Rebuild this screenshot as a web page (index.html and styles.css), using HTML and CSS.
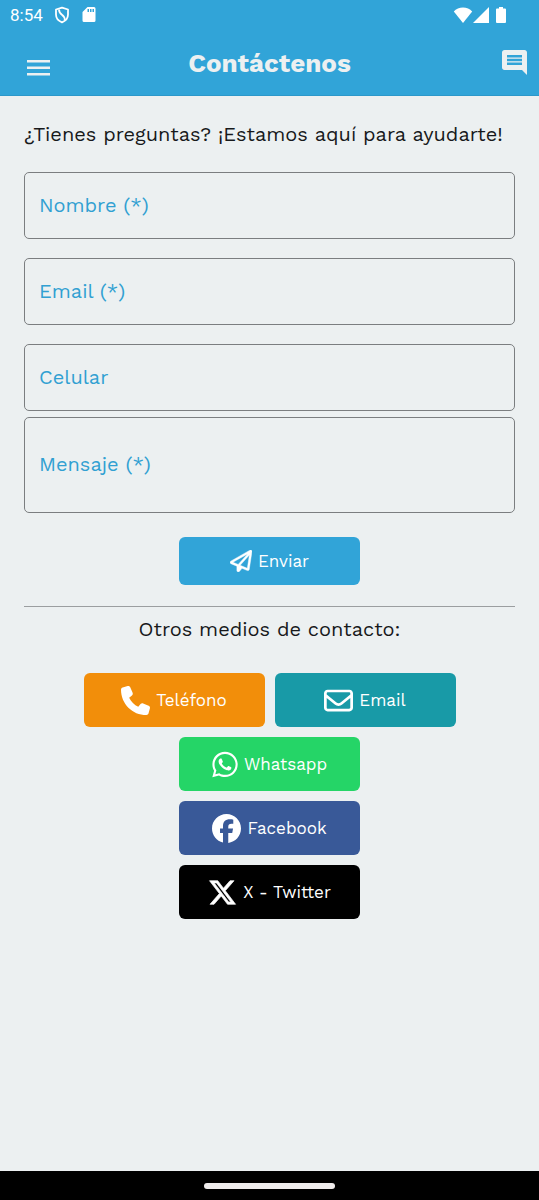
FILE: index.html
```
<!DOCTYPE html>
<html lang="es">
<head>
<meta charset="utf-8">
<meta name="viewport" content="width=device-width, initial-scale=1">
<title>Contáctenos</title>
<link rel="stylesheet" href="styles.css">
</head>
<body>
<div class="screen">
  <header class="top">
    <div class="status">
      <span class="clock">8:54</span>
      <svg class="status-icon" viewBox="0 0 16 18" aria-hidden="true"><path d="M8 1.600 14 3.500v5c0 3.700-2.500 6.400-6 7.800C4.500 14.900 2 12.200 2 8.500v-5z" fill="none" stroke="currentColor" stroke-width="1.800" stroke-linejoin="round"/><path d="M5 3.500C5 9.500 11 8 10.800 14" fill="none" stroke="currentColor" stroke-width="1.800"/></svg>
      <svg class="status-icon" viewBox="0 0 16 18" aria-hidden="true"><path fill="currentColor" fill-rule="evenodd" d="M6.500 1H13a1.500 1.500 0 0 1 1.500 1.500v12A1.500 1.500 0 0 1 13 16H3a1.500 1.500 0 0 1-1.500-1.500V6zM6.500 3v3H8V3zm2.500 0v3h1.500V3zm2.500 0v3H13V3z"/></svg>
      <span class="system">
        <svg class="wifi" viewBox="0 0 20 16" aria-hidden="true"><path fill="currentColor" d="M10 16 .8 4.500C3 2 6.500.5 10 .5S17 2 19.200 4.500z"/></svg>
        <svg class="signal" viewBox="0 0 16 16" aria-hidden="true"><path fill="currentColor" d="M16 0v16H0z"/></svg>
        <svg class="battery" viewBox="0 0 10 16" aria-hidden="true"><path fill="currentColor" d="M3 0h4v1.500h2a1 1 0 0 1 1 1V15a1 1 0 0 1-1 1H1a1 1 0 0 1-1-1V2.500a1 1 0 0 1 1-1h2z"/></svg>
      </span>
    </div>
    <div class="bar">
      <button class="icon-button menu" type="button" aria-label="Menú"><svg viewBox="0 0 24 16" aria-hidden="true"><path fill="currentColor" d="M1 0h23v2.600H1zM1 6.500h23v2.600H1zM1 13h23v2.600H1z"/></svg></button>
      <h1 class="title">Contáctenos</h1>
      <button class="icon-button chat" type="button" aria-label="Mensajes"><svg viewBox="2 2 20 20" aria-hidden="true"><path fill="currentColor" d="M21.990 4c0-1.100-.89-2-1.990-2H4c-1.100 0-2 .9-2 2v12c0 1.100.9 2 2 2h14l4 4-.01-18zM18 14H6v-2h12v2zm0-3H6V9h12v2zm0-3H6V6h12v2z"/></svg></button>
    </div>
  </header>

  <main class="content">
    <p class="intro">¿Tienes preguntas? ¡Estamos aquí para ayudarte!</p>
    <form class="form">
      <input class="field" type="text" placeholder="Nombre (*)" aria-label="Nombre (*)">
      <input class="field" type="email" placeholder="Email (*)" aria-label="Email (*)">
      <div class="field-pair">
        <input class="field" type="tel" placeholder="Celular" aria-label="Celular">
        <textarea class="field message" placeholder="Mensaje (*)" aria-label="Mensaje (*)"></textarea>
      </div>
      <button class="button send" type="submit">
        <svg viewBox="0 0 512 512" aria-hidden="true"><path fill="currentColor" stroke="currentColor" stroke-width="10" d="M16.100 260.200c-22.600 12.900-20.500 47.300 3.600 57.300L160 376V479.300c0 18.100 14.600 32.700 32.700 32.700c9.700 0 18.900-4.300 25.100-11.800l62-74.300 123.900 51.600c18.900 7.900 40.800-4.500 43.900-24.700l64-416c1.900-12.100-3.400-24.300-13.500-31.200s-23.300-7.500-34-1.400l-448 256zm52.100 25.500L409.700 90.600 190.100 336l1.200 1L68.200 285.700zM403.300 425.400L236.700 355.900 450.800 116.600 403.300 425.400z"/></svg>
        Enviar
      </button>
    </form>

    <section class="other">
      <h2 class="subtitle">Otros medios de contacto:</h2>
      <div class="links">
        <a class="button phone" href="#telefono"><svg viewBox="0 0 512 512" aria-hidden="true"><path fill="currentColor" d="M164.900 24.600c-7.700-18.600-28-28.500-47.400-23.200l-88 24C12.100 30.200 0 46 0 64C0 311.400 200.600 512 448 512c18 0 33.800-12.100 38.600-29.500l24-88c5.300-19.400-4.600-39.700-23.200-47.400l-96-40c-16.300-6.800-35.200-2.100-46.300 11.600L304.700 368C234.300 334.700 177.300 277.700 144 207.300L193.300 167c13.700-11.200 18.400-30 11.600-46.300l-40-96z"/></svg>Teléfono</a>
        <a class="button email" href="#email"><svg viewBox="0 0 512 512" aria-hidden="true"><path fill="currentColor" d="M64 112c-8.800 0-16 7.200-16 16v22.100L220.500 291.700c20.700 17 50.400 17 71.100 0L464 150.100V128c0-8.800-7.200-16-16-16H64zM48 212.200V384c0 8.800 7.200 16 16 16H448c8.800 0 16-7.200 16-16V212.200L322 328.800c-38.400 31.500-93.700 31.500-132 0L48 212.200zM0 128C0 92.700 28.700 64 64 64H448c35.300 0 64 28.700 64 64V384c0 35.300-28.700 64-64 64H64c-35.300 0-64-28.700-64-64V128z"/></svg>Email</a>
        <a class="button whatsapp" href="#whatsapp"><svg viewBox="0 0 448 512" aria-hidden="true"><path fill="currentColor" d="M380.900 97.100C339 55.100 283.200 32 223.900 32c-122.400 0-222 99.600-222 222 0 39.100 10.200 77.300 29.600 111L0 480l117.700-30.900c32.400 17.700 68.900 27 106.100 27h.1c122.300 0 224.100-99.600 224.100-222 0-59.300-25.200-115-67.100-157zm-157 341.600c-33.200 0-65.700-8.900-94-25.700l-6.700-4-69.800 18.300L72 359.200l-4.400-7c-18.500-29.400-28.200-63.300-28.200-98.200 0-101.700 82.800-184.500 184.600-184.500 49.300 0 95.600 19.200 130.400 54.100 34.800 34.900 56.200 81.200 56.100 130.500 0 101.800-84.900 184.600-186.600 184.600zm101.200-138.200c-5.500-2.800-32.800-16.200-37.900-18-5.100-1.900-8.800-2.800-12.500 2.800-3.700 5.600-14.300 18-17.600 21.800-3.200 3.700-6.500 4.200-12 1.400-32.600-16.300-54-29.100-75.500-66-5.700-9.800 5.700-9.100 16.300-30.300 1.800-3.700.9-6.900-.5-9.700-1.400-2.800-12.500-30.100-17.100-41.200-4.500-10.800-9.100-9.300-12.500-9.500-3.200-.2-6.900-.2-10.600-.2-3.700 0-9.700 1.400-14.800 6.900-5.100 5.600-19.400 19-19.400 46.300 0 27.300 19.900 53.700 22.600 57.400 2.800 3.700 39.100 59.700 94.800 83.800 35.200 15.200 49 16.500 66.600 13.900 10.700-1.600 32.800-13.400 37.400-26.400 4.600-13 4.600-24.100 3.200-26.400-1.300-2.500-5-3.900-10.500-6.600z"/></svg>Whatsapp</a>
        <a class="button facebook" href="#facebook"><svg viewBox="8 8 496 496" aria-hidden="true"><path fill="currentColor" d="M504 256C504 119 393 8 256 8S8 119 8 256c0 116 80 214 188 241V333h-51v-77h51v-33c0-85 38-124 122-124 16 0 43 3 54 6v70c-6-1-16-1-29-1-41 0-57 16-57 56v26h82l-14 77h-68v169C409 488 504 383 504 256z"/></svg>Facebook</a>
        <a class="button twitter" href="#x"><svg viewBox="0 0 512 512" aria-hidden="true"><path fill="currentColor" stroke="currentColor" stroke-width="12" d="M389.200 48h70.600L305.600 224.200 487 464H345L233.700 318.600 106.500 464H35.800L200.700 275.500 26.800 48H172.400L272.900 180.900 389.200 48zM364.400 421.800h39.100L151.100 88h-42L364.400 421.800z"/></svg>X - Twitter</a>
      </div>
    </section>
  </main>

  <footer class="navigation"><span class="handle"></span></footer>
</div>
</body>
</html>
```
FILE: styles.css
```
* {
  box-sizing: border-box;
}

body {
  margin: 0;
  background: #ecf0f1;
  color: #17191b;
  font-family: "Work Sans", Inter, "Noto Sans", sans-serif;
}

svg {
  display: block;
  flex: none;
}

.screen {
  min-height: 100vh;
  display: flex;
  flex-direction: column;
}

.top {
  background: #31a4d8;
  color: #fff;
  padding-bottom: 8px;
  border-bottom: 1px solid #2c98ca;
}

.status {
  display: flex;
  align-items: center;
  gap: 11px;
  height: 30px;
  padding: 0 33px 0 10px;
}

.clock {
  font-family: Roboto, sans-serif;
  font-size: 17px;
}

.status-icon {
  width: 16px;
  height: 18px;
}

.system {
  display: flex;
  margin-left: auto;
}

.wifi {
  width: 20px;
  height: 16px;
}

.signal {
  width: 16px;
  height: 16px;
  margin-right: 7px;
}

.battery {
  width: 10px;
  height: 16px;
}

.bar {
  display: grid;
  grid-template-columns: 1fr auto 1fr;
  align-items: center;
  height: 57px;
  padding: 0 12px;
  color: #ecf0f1;
}

.icon-button {
  padding: 0;
  border: 0;
  background: none;
  color: inherit;
}

.menu {
  justify-self: start;
  padding: 18px 0 0 14px;
}

.menu svg {
  width: 24px;
  height: 16px;
}

.chat {
  justify-self: end;
  padding-top: 8px;
}

.chat svg {
  width: 25px;
  height: 25px;
}

.title {
  margin: 0;
  padding-top: 8px;
  font-size: 26px;
  line-height: 32px;
  font-weight: 700;
}

.content {
  flex: 1;
  padding: 24px;
}

.intro {
  margin: 0 0 24px;
  font-size: 20px;
  line-height: 28px;
}

.form {
  display: flex;
  flex-direction: column;
  gap: 19px;
}

.field-pair {
  display: flex;
  flex-direction: column;
  gap: 6px;
}

.field {
  display: block;
  width: 100%;
  height: 67px;
  margin: 0;
  padding: 0 14px 2px;
  border: 1px solid #7b7e80;
  border-radius: 5px;
  background: transparent;
  color: #17191b;
  font: 400 20px/28px "Work Sans", Inter, "Noto Sans", sans-serif;
}

.field::placeholder {
  color: #31a0d2;
  opacity: 1;
}

.message {
  height: 96px;
  padding: 32px 14px;
  resize: none;
}

.button {
  display: flex;
  align-items: center;
  justify-content: center;
  gap: 6px;
  width: 181px;
  height: 54px;
  border: 0;
  border-radius: 6px;
  color: #fff;
  font: 400 17px/24px "Work Sans", Inter, "Noto Sans", sans-serif;
  text-decoration: none;
}

.button svg {
  width: 29px;
  height: 29px;
}

.send {
  align-self: center;
  height: 48px;
  margin-top: 5px;
  background: #31a4d8;
}

.send svg {
  width: 22px;
  height: 22px;
}

.other {
  margin-top: 21px;
  padding-top: 8px;
  border-top: 1px solid #9b9ea0;
}

.subtitle {
  margin: 0 0 30px;
  font-size: 20px;
  line-height: 28px;
  font-weight: 400;
  text-align: center;
}

.links {
  display: flex;
  flex-wrap: wrap;
  justify-content: center;
  gap: 10px;
  max-width: 400px;
  margin: 0 auto;
}

.phone {
  background: #f28e0a;
}

.email {
  background: #189aa7;
}

.whatsapp {
  background: #25d567;
}

.whatsapp svg {
  width: 26px;
}

.facebook {
  background: #395998;
}

.twitter {
  background: #000;
}

.links .button {
  flex: none;
}

.links .whatsapp,
.links .facebook,
.links .twitter {
  margin: 0 90px;
}

.navigation {
  display: flex;
  justify-content: center;
  align-items: center;
  height: 29px;
  background: #000;
}

.handle {
  width: 131px;
  height: 6px;
  border-radius: 3px;
  background: #f0eded;
}
```
